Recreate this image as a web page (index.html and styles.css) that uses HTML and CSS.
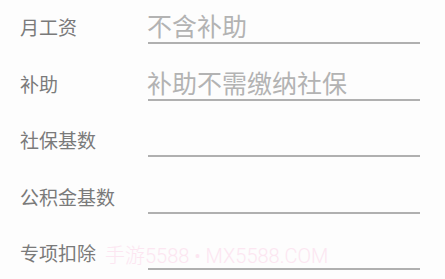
FILE: index.html
```html
<!DOCTYPE html>
<html lang="zh-CN">
<head>
<meta charset="utf-8">
<title>工资计算</title>
<link rel="stylesheet" href="styles.css">
</head>
<body>
<div class="form">
  <div class="row"><div class="label">月工资</div><div class="field"><span class="ph">不含补助</span></div></div>
  <div class="row"><div class="label">补助</div><div class="field"><span class="ph">补助不需缴纳社保</span></div></div>
  <div class="row"><div class="label">社保基数</div><div class="field"></div></div>
  <div class="row"><div class="label">公积金基数</div><div class="field"></div></div>
  <div class="row"><div class="label">专项扣除</div><div class="field"></div></div>
  <div class="watermark">手游5588 • MX5588.COM</div>
</div>
</body>
</html>
```
FILE: styles.css
```css
html, body {
  margin: 0;
  padding: 0;
  background: #fdfdfd;
}
body {
  font-family: "Noto Sans CJK SC", "Noto Sans", sans-serif;
  width: 445px;
  height: 279px;
  overflow: hidden;
}
.form {
  position: relative;
  padding-left: 20px;
}
.row {
  display: flex;
  align-items: flex-start;
  height: 56.6px;
}
.label {
  width: 128px;
  flex: none;
  padding-top: 12px;
  line-height: 30px;
  font-size: 19px;
  color: #7a7a7a;
}
.field {
  width: 272px;
  height: 32px;
  padding-top: 10px;
  border-bottom: 2px solid #b0b0b0;
  line-height: 30px;
  font-size: 25px;
  color: #b3b3b3;
}
.ph {
  display: block;
  margin-left: -1px;
}
.watermark {
  position: absolute;
  left: 105px;
  top: 241px;
  font-family: "Roboto", "Noto Sans CJK SC", sans-serif;
  font-size: 20px;
  font-weight: 300;
  line-height: 30px;
  color: #fce6f1;
  white-space: nowrap;
}
```
